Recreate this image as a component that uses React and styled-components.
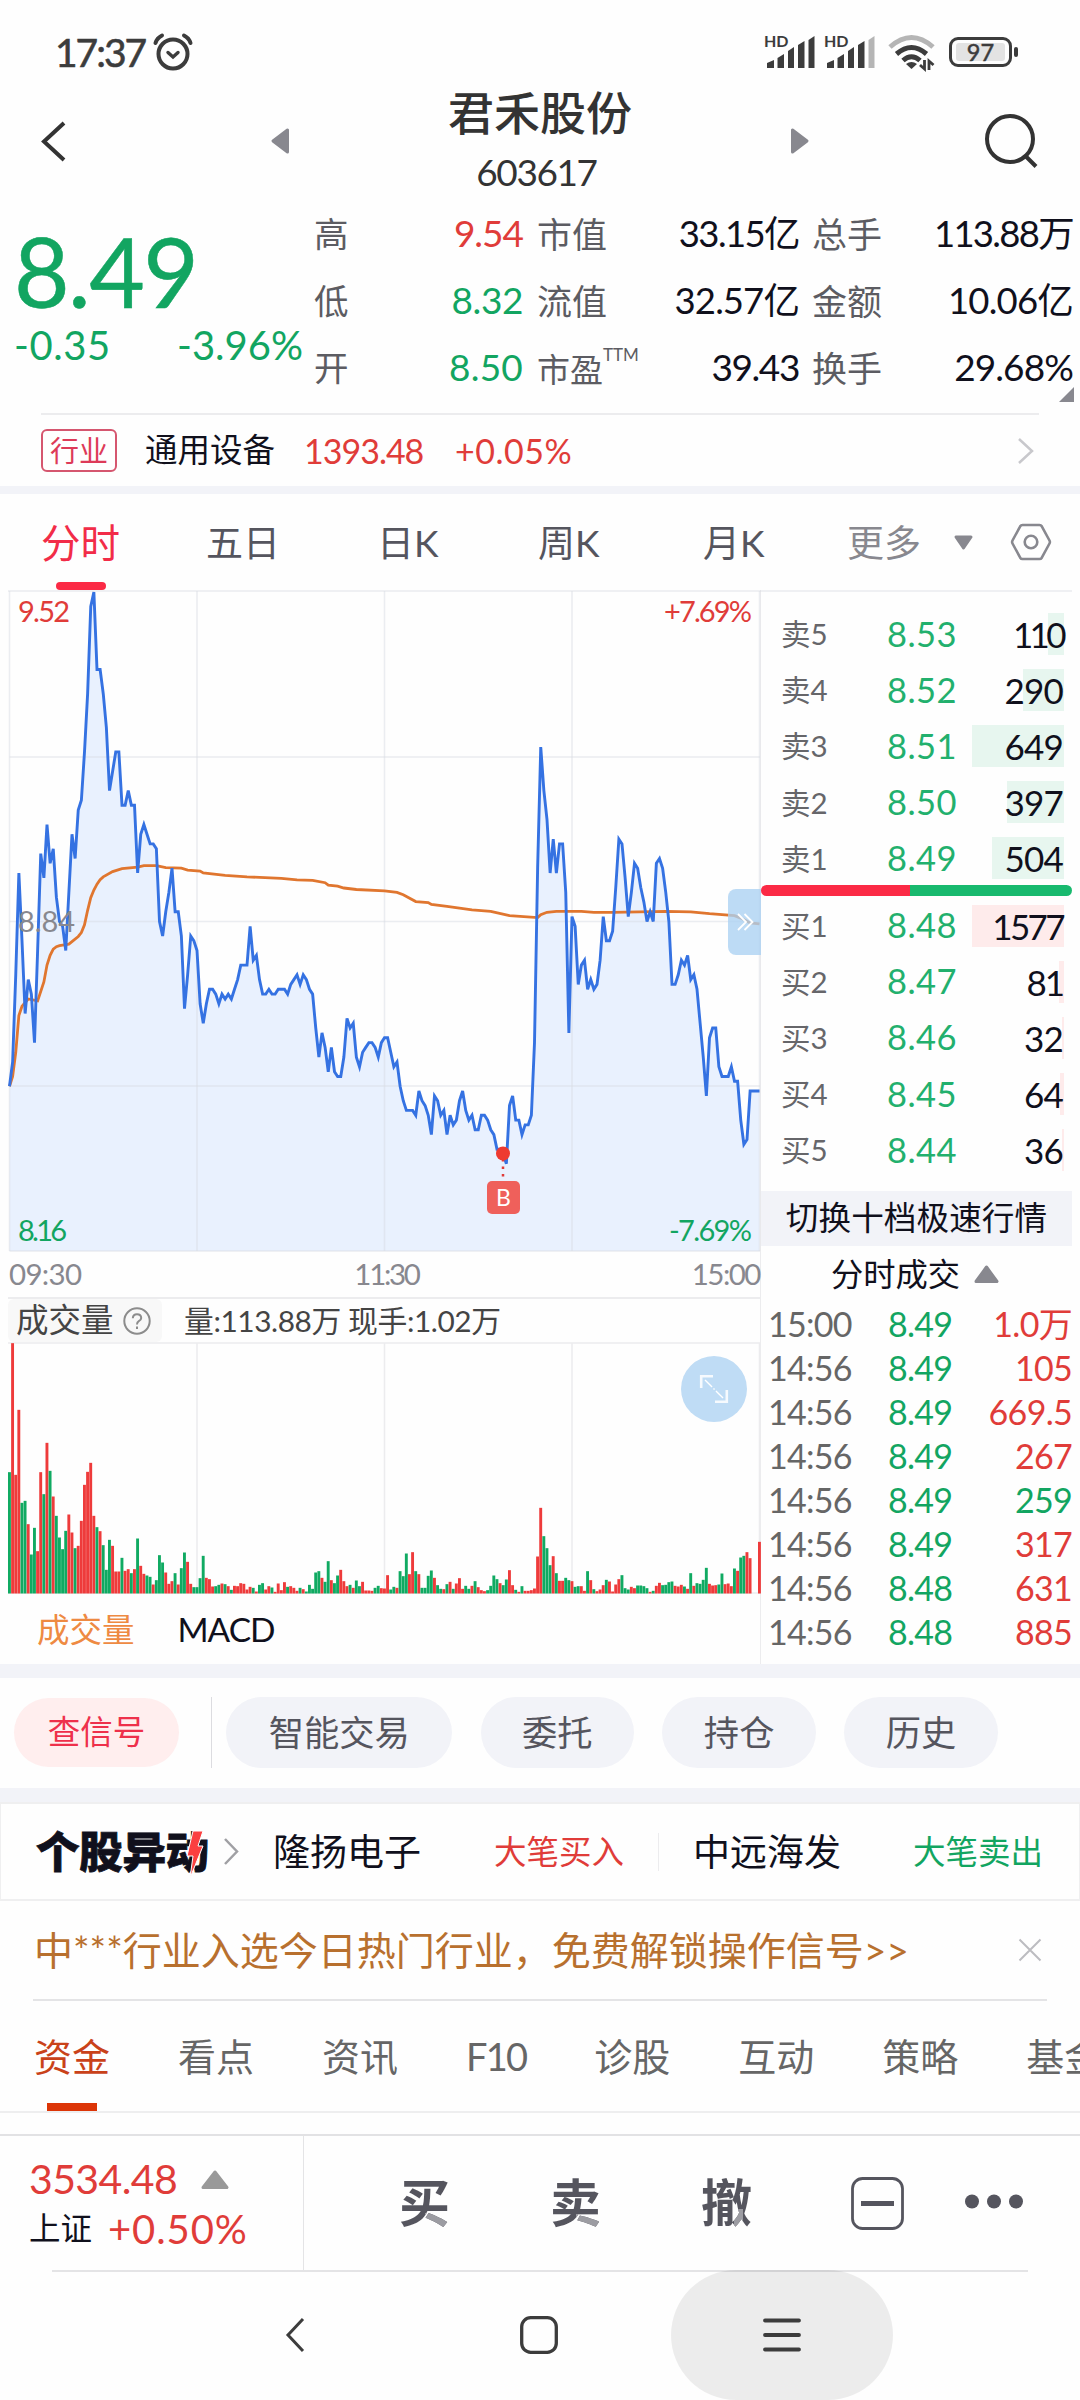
import React from 'react';
import styled, { createGlobalStyle } from 'styled-components';

const RED = '#e03c39';
const GREEN = '#12a561';
const GREY = '#88888f';
const LINE = '#ececee';
const BAND = '#f2f3f8';

const GlobalStyle = createGlobalStyle`
    * {
        box-sizing: border-box;
    }
    body {
        margin: 0;
        background: #fefefe;
        font-family: Lato, "Noto Sans CJK SC", sans-serif;
        color: #10101c;
    }
    svg {
        display: block;
        flex: none;
        overflow: visible;
    }
`;

const Screen = styled.div`
    width: 1080px;
    height: 2400px;
    overflow: hidden;
    display: flex;
    flex-direction: column;
    white-space: nowrap;
    line-height: 1;
    > * {
        flex: none;
    }
`;

const Text = styled.span`
    font-size: ${p => p.$size}px;
    color: ${p => p.$color || 'inherit'};
    font-weight: ${p => p.$weight || 400};
    letter-spacing: ${p => p.$ls || 0}px;
    line-height: 1.2;
`;

const Divider = styled.div`
    height: 2px;
    margin: 0 ${p => p.$right || 0}px 0 ${p => p.$left || 0}px;
    background: ${p => p.$color || LINE};
`;

const Band = styled.div`
    height: ${p => p.$h}px;
    background: ${BAND};
`;

const Gap = styled.div`
    width: ${p => p.$w || 0}px;
    height: ${p => p.$h || 0}px;
    flex: none;
`;

/* ---------- status bar + header ---------- */

const StatusBar = styled.div`
    height: 84px;
    padding: 20px 61px 0 55px;
    display: flex;
    align-items: center;
    justify-content: space-between;
    color: #3c3c3c;
`;

const StatusGroup = styled.div`
    display: flex;
    align-items: center;
    gap: ${p => p.$gap}px;
`;

const Clock = styled.span`
    font-size: 39px;
    letter-spacing: -2px;
    line-height: 1.2;
    -webkit-text-stroke: 0.6px #3c3c3c;
`;

const Header = styled.header`
    height: 116px;
    padding-bottom: 2px;
    display: grid;
    grid-template-columns: 271px 18px 502px 18px 271px;
    align-items: center;
    color: #333;
`;

const HeaderEdge = styled.div`
    display: flex;
    justify-content: ${p => (p.$end ? 'flex-end' : 'flex-start')};
    padding: 0 42px 0 41px;
`;

const TitleBlock = styled.div`
    display: flex;
    flex-direction: column;
    align-items: center;
    gap: 10px;
    padding-bottom: 2px;
`;

const Code = styled.span`
    font-size: 37px;
    letter-spacing: -1.4px;
    line-height: 1.2;
    margin-right: 7px;
`;

/* ---------- quote ---------- */

const Quote = styled.section`
    height: 213px;
    display: flex;
    position: relative;
`;

const PriceBlock = styled.div`
    width: 314px;
    padding: 20px 11px 0 14px;
    color: ${GREEN};
`;

const BigPrice = styled.div`
    font-size: 96px;
    line-height: 101px;
    letter-spacing: -1.6px;
    -webkit-text-stroke: 0.5px ${GREEN};
`;

const ChangeRow = styled.div`
    display: flex;
    justify-content: space-between;
`;

const StatColumn = styled.div`
    width: ${p => p.$w}px;
    margin-right: ${p => p.$mr}px;
    display: flex;
    flex-direction: column;
`;

const Stat = styled.div`
    height: 67px;
    display: flex;
    align-items: center;
    justify-content: space-between;
    sup {
        font-size: 17px;
        line-height: 1;
        vertical-align: 21px;
    }
`;

const Corner = styled.svg`
    position: absolute;
    right: 6px;
    bottom: 11px;
`;

const Industry = styled.section`
    height: 71px;
    padding: 0 46px 0 41px;
    display: flex;
    align-items: center;
    svg {
        margin-left: auto;
    }
`;

const Tag = styled.span`
    width: 76px;
    height: 43px;
    display: flex;
    align-items: center;
    justify-content: center;
    border: 2px solid #d5566f;
    border-radius: 6px;
    color: #dd3a58;
    font-size: 29px;
    margin-right: 28px;
`;

const IndustryName = styled.span`
    width: 159px;
    font-size: 32.5px;
`;

const IndustryNum = styled.span`
    width: ${p => p.$w}px;
    font-size: 34px;
    letter-spacing: ${p => p.$ls}px;
    color: ${RED};
`;

/* ---------- period tabs ---------- */

const PeriodTabs = styled.nav`
    height: 96px;
    display: grid;
    grid-template-columns: 206px 171px 161px 165px 144px 107px 56px 70px;
`;

const Period = styled.div`
    height: 96px;
    display: flex;
    align-items: center;
    font-size: 37px;
    color: ${p => (p.$muted ? GREY : '#55555e')};
    ${p => p.$active && `
        flex-direction: column;
        justify-content: flex-end;
        align-items: flex-start;
        padding-left: 41px;
        gap: 20px;
        font-size: 39.5px;
        color: #f22c48;
        &::after {
            content: "";
            width: 50px;
            height: 8px;
            margin-left: 15px;
            border-radius: 4px;
            background: #fb2a45;
        }
    `}
`;

/* ---------- market area ---------- */

const Market = styled.section`
    height: 1074px;
    display: flex;
`;

const ChartColumn = styled.div`
    width: 761px;
    position: relative;
    border-right: 1px solid ${LINE};
    display: flex;
    flex-direction: column;
`;

const TimeAxis = styled.div`
    height: 45px;
    padding: 0 0 2px 9px;
    display: flex;
    justify-content: space-between;
    align-items: center;
    color: ${GREY};
`;

const VolumeHead = styled.div`
    height: 45px;
    margin-left: 8px;
    display: flex;
    align-items: center;
    color: #444;
    border-top: 2px solid ${LINE};
`;

const VolumeChip = styled.div`
    width: 154px;
    height: 43px;
    padding-left: 8px;
    display: flex;
    align-items: center;
    gap: 9px;
    margin-right: 22px;
    border-radius: 6px;
    background: #f8f8f8;
    font-size: 32.5px;
`;

const IndicatorTabs = styled.div`
    height: 70px;
    padding-left: 37px;
    display: flex;
    align-items: center;
    gap: 43px;
`;

const SlideButton = styled.div`
    position: absolute;
    right: -1px;
    top: 299px;
    width: 33px;
    height: 66px;
    display: flex;
    align-items: center;
    justify-content: center;
    border-radius: 8px 0 0 8px;
    background: rgba(170, 209, 242, 0.78);
`;

const ExpandButton = styled.div`
    position: absolute;
    left: 681px;
    top: 766px;
    width: 66px;
    height: 66px;
    display: flex;
    align-items: center;
    justify-content: center;
    border-radius: 50%;
    background: #bfdcf5;
`;

const BookColumn = styled.div`
    width: 311px;
    padding-top: 16px;
    display: flex;
    flex-direction: column;
    overflow: hidden;
`;

const Level = styled.div`
    height: 56.1px;
    flex: none;
    display: grid;
    grid-template-columns: 106px 75px 1fr;
    align-items: center;
    padding: 0 8px 0 20px;
`;

const LevelName = styled.span`
    font-size: 29.5px;
    color: #66666a;
`;

const LevelPrice = styled.span`
    font-size: 34.5px;
    letter-spacing: 0.4px;
    text-align: center;
    margin-left: -5px;
    color: #22b06d;
`;

const LevelQty = styled.span`
    height: 42px;
    line-height: 42px;
    font-size: 35px;
    text-align: right;
    letter-spacing: ${p => p.$ls || -0.8}px;
    padding-right: 1px;
    background: linear-gradient(${p => p.$color}, ${p => p.$color}) right / ${p => p.$bar}px 100% no-repeat;
`;

const Ratio = styled.div`
    height: 11px;
    flex: none;
    border-radius: 6px;
    background: linear-gradient(90deg, #fb2a45 48%, #18b96e 48%);
    margin: -1px 0 1px;
`;

const SwitchDepth = styled.div`
    height: 55px;
    flex: none;
    margin-top: 13px;
    display: flex;
    align-items: center;
    justify-content: center;
    background: ${BAND};
    font-size: 32.6px;
    letter-spacing: 0.1px;
`;

const TicksTitle = styled.div`
    height: 56px;
    flex: none;
    display: flex;
    align-items: center;
    justify-content: center;
    gap: 14px;
    font-size: 32.3px;
    padding-right: 3px;
`;

const Tick = styled.div`
    height: 44px;
    flex: none;
    display: grid;
    grid-template-columns: 120px 66px 1fr;
    align-items: center;
    padding: 0 0 0 7px;
    font-size: 34px;
    letter-spacing: -0.7px;
    color: #666;
`;

const TickValue = styled.span`
    color: ${p => (p.$up ? RED : GREEN)};
    text-align: ${p => p.$align || 'left'};
`;

/* ---------- lower part ---------- */

const Actions = styled.section`
    height: 110px;
    padding: 0 0 1px 14px;
    display: flex;
    align-items: center;
`;

const Pill = styled.div`
    width: ${p => p.$w}px;
    height: ${p => (p.$hot ? 69 : 71)}px;
    margin-right: 28.3px;
    display: flex;
    align-items: center;
    justify-content: center;
    border-radius: 36px;
    font-size: ${p => (p.$hot ? 32.5 : 35.3)}px;
    color: ${p => (p.$hot ? '#ee304b' : '#55555e')};
    background: ${p => (p.$hot ? '#ffeeee' : BAND)};
`;

const VLine = styled.div`
    width: 1px;
    height: ${p => p.$h}px;
    margin: 0 ${p => p.$mr}px 0 ${p => p.$ml}px;
    background: ${p => p.$color || '#dcdce0'};
`;

const Movers = styled.section`
    height: 99px;
    border: 2px solid #efeff0;
    border-width: 2px 1px;
    padding: 0 33px 0 35px;
    display: flex;
    align-items: center;
`;

const MoversLogo = styled.div`
    width: 173px;
    position: relative;
    font-size: 43.5px;
    font-weight: 900;
    letter-spacing: -0.3px;
    -webkit-text-stroke: 0.8px #10101c;
    svg {
        position: absolute;
        left: 151px;
        top: 1px;
    }
`;

const MoverName = styled.span`
    width: ${p => p.$w}px;
    font-size: 37px;
`;

const Notice = styled.section`
    height: 98px;
    padding: 0 38px 0 34px;
    display: flex;
    align-items: center;
    justify-content: space-between;
    color: #b8702e;
    font-size: 39px;
`;

const InfoTabs = styled.nav`
    height: 110px;
    padding-left: 34px;
    display: flex;
    gap: 68px;
`;

const InfoTab = styled.div`
    height: 110px;
    flex: none;
    padding-top: 36px;
    font-size: 38px;
    letter-spacing: ${p => p.$ls || 0}px;
    color: ${p => (p.$active ? '#c9421a' : '#666')};
    &::after {
        content: "";
        display: ${p => (p.$active ? 'block' : 'none')};
        width: 50px;
        height: 8px;
        margin: 28px auto 0;
        background: #dc3507;
    }
`;

const TradeBar = styled.section`
    height: 134px;
    display: flex;
    align-items: center;
`;

const IndexBox = styled.div`
    width: 303px;
    padding: 2px 0 0 29px;
    display: flex;
    flex-direction: column;
    gap: 2px;
    color: ${RED};
`;

const IndexRow = styled.div`
    display: flex;
    align-items: center;
    height: 48px;
`;

/* the last stroke of each trade glyph is drawn in a lighter grey */
const TradeGlyph = styled.span`
    width: ${p => p.$w}px;
    font-size: 51px;
    font-weight: 700;
    line-height: 60px;
    color: transparent;
    background:
        linear-gradient(#9c9ca2, #9c9ca2) ${p => p.$tip} no-repeat,
        #55555e;
    background-clip: text;
    -webkit-background-clip: text;
`;

const NavBar = styled.div`
    height: 130px;
    display: flex;
    align-items: center;
    padding-left: 285px;
    margin-top: -2px;
`;

const NavPill = styled.div`
    width: 222px;
    height: 130px;
    margin-left: 113px;
    display: flex;
    align-items: center;
    justify-content: center;
    border-radius: 65px;
    background: rgba(0, 0, 0, 0.07);
`;

/* ---------- data ---------- */

// price per minute in cents, 09:30 - 15:00
const PRICES = [
    850, 855, 873, 894, 880, 865, 872, 869, 859, 878, 898, 893, 904, 896, 899, 889, 884, 883, 878, 890,
    902, 897, 907, 909, 919, 931, 949, 952, 936, 936, 931, 924, 911, 915, 919, 919, 908, 908, 911, 908,
    908, 894, 902, 904, 902, 900, 900, 899, 884, 881, 886, 890, 895, 886, 886, 881, 866, 873, 881, 880,
    878, 867, 863, 867, 870, 870, 869, 867, 869, 868, 869, 868, 870, 872, 875, 875, 875, 883, 876, 877,
    872, 869, 869, 870, 869, 869, 870, 870, 870, 869, 871, 872, 873, 871, 873, 872, 870, 869, 862, 856,
    861, 858, 853, 858, 853, 852, 852, 856, 864, 862, 863, 856, 854, 857, 858, 859, 859, 858, 856, 859,
    860, 860, 857, 854, 855, 850, 847, 845, 845, 845, 844, 849, 847, 846, 844, 840, 848, 847, 844, 845,
    840, 844, 842, 843, 847, 849, 845, 843, 844, 841, 841, 844, 844, 843, 841, 840, 837, 837, 836, 834,
    846, 848, 843, 843, 840, 842, 842, 844, 859, 895, 920, 911, 905, 894, 901, 894, 900, 900, 890, 861,
    885, 883, 871, 875, 876, 870, 872, 870, 871, 876, 885, 880, 880, 882, 891, 901, 900, 893, 885, 890,
    896, 895, 891, 888, 884, 886, 884, 896, 897, 895, 890, 884, 871, 871, 873, 876, 875, 877, 872, 873,
    870, 863, 856, 848, 860, 862, 862, 854, 852, 852, 852, 854, 851, 851, 843, 838, 839, 849, 849, 849,
    849,
];

// average price: [minute, cents]
const AVERAGE = [
    [0, 850], [1, 852], [2, 857], [3, 864.6], [4, 866.5], [6, 868], [9, 867.6], [11, 871.5], [12, 875],
    [13, 877], [14, 878.3], [15, 878.8], [16, 879], [19, 879.3], [22, 880.9], [23, 881.7], [24, 883.3],
    [25, 886.3], [26, 888.9], [27, 890.5], [28, 891.7], [29, 892.6], [30, 893.2], [33, 894.3], [36, 894.9],
    [41, 895.2], [43, 895.5], [47, 895.5], [50, 895.1], [55, 895], [57, 894.6], [61, 894.4], [62, 894],
    [69, 893.5], [76, 893.2], [87, 892.9], [92, 892.6], [97, 892.5], [101, 892], [102, 891.5], [105, 891.3],
    [107, 890.9], [111, 890.6], [120, 890.3], [124, 890], [126, 889.5], [130, 888.1], [134, 887.9],
    [135, 887.5], [140, 887.1], [148, 886.4], [154, 886.1], [160, 885.2], [169, 884.8], [170, 885.4],
    [172, 885.9], [175, 886.1], [183, 886.1], [187, 885.9], [193, 885.9], [210, 886.1], [218, 886],
    [224, 885.6], [232, 885.2], [234, 884.7], [237, 883.7], [240, 883.5],
];

// volume per minute, positive = rising, negative = falling
const VOLUMES = [
    -364, 751, 356, 551, -272, -278, 208, -117, -197, 127, 364, -298, 452, -368, 291, -233, -168, -133, -188, 237,
    183, -136, 143, 218, 326, 365, 392, 233, -199, 187, -145, -71, -161, 143, 66, 66, -107, 68, 73, -61,
    73, -165, 83, 59, -54, -50, 27, -40, -115, -93, 63, 29, 37, -61, 27, -76, -123, 95, 29, -19,
    -19, -46, -113, 47, 43, 21, -22, -26, 30, -28, 22, -11, 23, 22, 31, 29, 12, 20, -17, 6,
    -26, -31, 12, 22, -18, 5, 30, 10, 34, -20, 22, 17, 8, -17, 13, -6, -26, -14, -63, -67,
    47, -35, -97, 40, -31, -54, 71, 37, 22, -26, 17, -39, -22, 35, 9, 9, 8, -17, -23, 16,
    15, 55, -12, -20, 17, -67, -52, -120, 58, 124, -67, 58, -17, -17, -53, -69, 47, -25, -14, 13,
    -28, 35, -14, 30, 46, 14, -23, -14, 23, -37, 19, 10, 7, -10, -23, -54, -43, 31, -25, -42,
    70, 25, -11, 5, -22, 8, 8, 10, 15, 111, 257, -172, -136, -85, 112, -61, 38, 38, -47, -40,
    37, -20, -22, 22, 8, -67, 40, -13, 7, 12, 25, -41, 36, 6, 27, 43, -55, -16, -12, 20,
    16, -24, -24, -22, -16, 5, -8, 23, 32, -25, -26, -34, -36, 23, 21, 26, -21, 14, -61, 23,
    -31, -29, -41, -77, 29, 24, 25, -27, -60, 28, 30, 22, -75, 68, -108, -113, 124, 106, 0, 0,
    155,
];

// [name, price, quantity, bar width, letter spacing]
const ASKS = [
    ['卖5', '8.53', '110', 16, -3.6],
    ['卖4', '8.52', '290', 41],
    ['卖3', '8.51', '649', 92],
    ['卖2', '8.50', '397', 57],
    ['卖1', '8.49', '504', 72],
];

const BIDS = [
    ['买1', '8.48', '1577', 92, -2.6],
    ['买2', '8.47', '81', 5, -2],
    ['买3', '8.46', '32', 2],
    ['买4', '8.45', '64', 4],
    ['买5', '8.44', '36', 2],
];

const TICKS = [
    ['15:00', '8.49', '1.0万', true],
    ['14:56', '8.49', '105', true],
    ['14:56', '8.49', '669.5', true],
    ['14:56', '8.49', '267', true],
    ['14:56', '8.49', '259', false],
    ['14:56', '8.49', '317', true],
    ['14:56', '8.48', '631', true],
    ['14:56', '8.48', '885', true],
    ['14:56', '8.48', '500', false],
];

const minuteX = (i) => 9.5 + i * 3.125;
const priceY = (cents) => 2 + (952 - cents) * 4.845;

/* ---------- charts ---------- */

const PriceChart = () => {
    const line = PRICES.map((p, i) => `${minuteX(i)},${priceY(p).toFixed(1)}`).join(' ');
    const avg = AVERAGE.map(([i, p]) => `${minuteX(i)},${priceY(p).toFixed(1)}`).join(' ');

    return (
        <svg width="760" height="662" viewBox="0 0 760 662" fontFamily="Lato, sans-serif" fontSize="29">
            <polygon points={`9.5,661 ${line} 759.5,661`} fill="#e9f1fe" />
            <g stroke="#d8dce4" strokeOpacity="0.5" strokeWidth="1.5">
                <path d="M8 1H1072M9.5 167H760M9.5 331.5H760M9.5 496H760M9.5 661H760" />
                <path d="M9.5 1V661M197 1V661M384.5 1V661M572 1V661M759.5 1V661" />
            </g>
            <polyline points={avg} fill="none" stroke="#e0762f" strokeWidth="2.8" />
            <polyline points={line} fill="none" stroke="#3572e2" strokeWidth="2.9" />
            <text x="18" y="32" fill={RED} textLength="52">9.52</text>
            <text x="18" y="342" fill={GREY} textLength="57">8.84</text>
            <text x="18" y="651" fill={GREEN} textLength="49">8.16</text>
            <text x="664" y="32" fill={RED} textLength="88">+7.69%</text>
            <text x="669" y="651" fill={GREEN} textLength="83">-7.69%</text>
            <path d="M503 569V592" stroke={RED} strokeWidth="2.5" strokeDasharray="2.5 5" />
            <circle cx="503" cy="563.5" r="7" fill="#ee3a30" />
            <rect x="487" y="591" width="33" height="33" rx="5" fill="#ef605b" />
            <text x="503.5" y="616" fill="#fff" fontSize="23" textAnchor="middle">B</text>
        </svg>
    );
};

const VolumeChart = () => (
    <svg width="762" height="252" viewBox="0 0 762 252">
        <path
            d="M8 1H760M197 1V251M384.5 1V251M572 1V251M759.5 1V251M8 251H760"
            stroke={LINE}
            strokeWidth="1.5"
        />
        {VOLUMES.map((v, i) => (
            <rect
                key={i}
                x={minuteX(i) - 1.5}
                y={251.5 - Math.abs(v) / 3}
                width="2.9"
                height={Math.abs(v) / 3}
                fill={v > 0 ? '#ee3b3b' : '#10aa62'}
            />
        ))}
    </svg>
);

/* ---------- icons ---------- */

const AlarmIcon = () => (
    <svg width="40" height="38" viewBox="0 0 40 38" fill="none" stroke="#3c3c3c" strokeLinecap="round">
        <circle cx="20" cy="21" r="14.5" strokeWidth="4" />
        <path d="M15 19.5L20 24L25 19.5" strokeWidth="3.4" />
        <path d="M2.5 10Q4 5 9 2.5M37.5 10Q36 5 31 2.5" strokeWidth="4" />
    </svg>
);

const SignalIcon = ({ weak }) => (
    <svg width="50" height="34" viewBox="0 0 50 34" fill="#3c3c3c">
        <path d="M2 33V28L9 25V33ZM12.5 33V23L19 19V33ZM23 33V16L29 12V33ZM33 33V10L39.5 6V33Z" />
        <path d="M43.5 33V5L49.5 1V33Z" fill={weak ? '#b5b5b5' : '#3c3c3c'} />
        <text x="-1" y="11.5" fontSize="16" fontWeight="700" fontFamily="Lato, sans-serif">HD</text>
    </svg>
);

const WifiIcon = () => (
    <svg width="48" height="36" viewBox="0 0 48 36" fill="none" strokeWidth="5">
        <path d="M2 13Q23.5 -6 45 13" stroke="#b5b5b5" />
        <path d="M8.5 20Q23.5 7 38.5 20M15 26.5Q23.5 19 32 26.5" stroke="#3c3c3c" />
        <path d="M18 30Q23.5 26 29 30L23.5 35Z" fill="#3c3c3c" />
        <path d="M36.5 26V35L32 31M41 36V27L45.5 31" stroke="#3c3c3c" strokeWidth="2.8" />
    </svg>
);

const BatteryIcon = () => (
    <svg width="70" height="32" viewBox="0 0 70 32">
        <rect x="1.5" y="2.5" width="60" height="27" rx="7.5" fill="none" stroke="#3c3c3c" strokeWidth="3" />
        <rect x="7" y="7" width="49" height="18" rx="3" fill="#e3e3e3" />
        <rect x="65" y="11" width="4" height="10" rx="2" fill="#3c3c3c" />
        <text x="31.5" y="24.5" textAnchor="middle" fontSize="23.5" fill="#3c3c3c" stroke="#3c3c3c" strokeWidth="0.5" fontFamily="Lato, sans-serif">97</text>
    </svg>
);

const Triangle = ({ w, h, points, color = GREY }) => (
    <svg width={w} height={h} viewBox={`0 0 ${w} ${h}`}>
        <polygon points={points} fill={color} stroke={color} strokeWidth="3" strokeLinejoin="round" />
    </svg>
);

const Chevron = ({ w, h, color, left, stroke = 2.5 }) => (
    <svg width={w} height={h} viewBox={`0 0 ${w} ${h}`} fill="none" stroke={color} strokeWidth={stroke}>
        <path d={left ? `M${w - 2} 2L3 ${h / 2}L${w - 2} ${h - 2}` : `M2 2L${w - 2} ${h / 2}L2 ${h - 2}`} />
    </svg>
);

/* ---------- sections ---------- */

const Levels = ({ rows, color }) => rows.map(([name, price, qty, bar, ls]) => (
    <Level key={name}>
        <LevelName>{name}</LevelName>
        <LevelPrice>{price}</LevelPrice>
        <LevelQty $bar={bar} $color={color} $ls={ls}>{qty}</LevelQty>
    </Level>
));

const QuotePanel = () => (
    <Quote>
        <PriceBlock>
            <BigPrice>8.49</BigPrice>
            <ChangeRow>
                <Text $size={40} $ls={0.6}>-0.35</Text>
                <Text $size={40} $ls={0}>-3.96%</Text>
            </ChangeRow>
        </PriceBlock>
        <StatColumn $w={209} $mr={14}>
            <Stat><Text $size={34.5} $color="#5c5c62">高</Text><Text $size={37} $ls={-1} $color={RED}>9.54</Text></Stat>
            <Stat><Text $size={34.5} $color="#5c5c62">低</Text><Text $size={37} $ls={-0.4} $color={GREEN}>8.32</Text></Stat>
            <Stat><Text $size={34.5} $color="#5c5c62">开</Text><Text $size={37} $ls={0.2} $color={GREEN}>8.50</Text></Stat>
        </StatColumn>
        <StatColumn $w={262} $mr={13}>
            <Stat><Text $size={35} $color="#5c5c62">市值</Text><Text $size={36.5} $ls={-1.6}>33.15亿</Text></Stat>
            <Stat><Text $size={35} $color="#5c5c62">流值</Text><Text $size={36.5} $ls={-0.9}>32.57亿</Text></Stat>
            <Stat><Text $size={33} $color="#5c5c62">市盈<sup>TTM</sup></Text><Text $size={37} $ls={-1.4}>39.43</Text></Stat>
        </StatColumn>
        <StatColumn $w={261} $mr={0}>
            <Stat><Text $size={35} $color="#5c5c62">总手</Text><Text $size={36.5} $ls={-1.7}>113.88万</Text></Stat>
            <Stat><Text $size={35} $color="#5c5c62">金额</Text><Text $size={36.5} $ls={-0.8}>10.06亿</Text></Stat>
            <Stat><Text $size={35} $color="#5c5c62">换手</Text><Text $size={37} $ls={-0.9}>29.68%</Text></Stat>
        </StatColumn>
        <Corner width="15" height="15" viewBox="0 0 15 15"><path d="M15 0V15H0Z" fill={GREY} /></Corner>
    </Quote>
);

const ChartPanel = () => (
    <ChartColumn>
        <PriceChart />
        <TimeAxis>
            <Text $size={29.5} $ls={-0.7}>09:30</Text>
            <Text $size={29.5} $ls={-2.3}>11:30</Text>
            <Text $size={29.5} $ls={-1.5}>15:00</Text>
        </TimeAxis>
        <VolumeHead>
            <VolumeChip>
                成交量
                <svg width="28" height="28" viewBox="0 0 28 28" fill="none" stroke="#8c8c8c" strokeWidth="2">
                    <circle cx="14" cy="14" r="12.7" />
                    <path d="M9.8 11.2Q10 7.2 14 7.2Q18.2 7.2 18.2 10.9Q18.2 12.9 15.8 14.2Q14 15.3 14 17.5M14 19.5V22" />
                </svg>
            </VolumeChip>
            <Text $size={29.8} $ls={-0.4}>量:113.88万 现手:1.02万</Text>
        </VolumeHead>
        <VolumeChart />
        <IndicatorTabs>
            <Text $size={32.5} $color="#ee8a42">成交量</Text>
            <Text $size={33.5} $ls={-1}>MACD</Text>
        </IndicatorTabs>
        <SlideButton>
            <svg width="18" height="20" viewBox="0 0 18 20" fill="none" stroke="#fff" strokeWidth="1.8">
                <path d="M2 2L10 10L2 18M8.5 2L16.5 10L8.5 18" />
            </svg>
        </SlideButton>
        <ExpandButton>
            <svg width="30" height="30" viewBox="0 0 30 30" fill="none" stroke="#fff">
                <path d="M2.2 14V2.2H14M27.8 16V27.8H16" strokeWidth="2.6" strokeOpacity="0.85" />
                <path d="M6 6L25 25" strokeWidth="1.4" strokeDasharray="10 2 1.5 2" />
            </svg>
        </ExpandButton>
    </ChartColumn>
);

const BookPanel = () => (
    <BookColumn>
        <Levels rows={ASKS} color="#e7f6ef" />
        <Ratio />
        <Levels rows={BIDS} color="#feebeb" />
        <SwitchDepth>切换十档极速行情</SwitchDepth>
        <TicksTitle>
            分时成交
            <Triangle w={25} h={18} points="12.5,2 23,16.5 2,16.5" />
        </TicksTitle>
        {TICKS.map(([time, price, qty, up], i) => (
            <Tick key={i}>
                <span>{time}</span>
                <TickValue>{price}</TickValue>
                <TickValue $up={up} $align="right">{qty}</TickValue>
            </Tick>
        ))}
    </BookColumn>
);

const App = () => {
    return (
        <Screen>
            <GlobalStyle />
            <StatusBar>
                <StatusGroup $gap={8}>
                    <Clock>17:37</Clock>
                    <AlarmIcon />
                </StatusGroup>
                <StatusGroup $gap={13}>
                    <StatusGroup $gap={10}>
                        <SignalIcon />
                        <SignalIcon weak />
                    </StatusGroup>
                    <WifiIcon />
                    <BatteryIcon />
                </StatusGroup>
            </StatusBar>

            <Header>
                <HeaderEdge><Chevron w={25} h={41} color="#333" stroke={4} left /></HeaderEdge>
                <Triangle w={18} h={26} points="16.5,2 16.5,24 2,13" />
                <TitleBlock>
                    <Text $size={46} $weight={500}>君禾股份</Text>
                    <Code>603617</Code>
                </TitleBlock>
                <Triangle w={18} h={26} points="1.5,2 1.5,24 16,13" />
                <HeaderEdge $end>
                    <svg width="54" height="54" viewBox="0 0 54 54" fill="none" stroke="#333" strokeWidth="4">
                        <circle cx="26" cy="25" r="23" />
                        <path d="M41.5 42L52 52.5" />
                    </svg>
                </HeaderEdge>
            </Header>

            <QuotePanel />
            <Divider $left={41} $right={41} />

            <Industry>
                <Tag>行业</Tag>
                <IndustryName>通用设备</IndustryName>
                <IndustryNum $w={151} $ls={-1}>1393.48</IndustryNum>
                <IndustryNum $w={130} $ls={0.5}>+0.05%</IndustryNum>
                <Chevron w={17} h={28} color="#c8c8cc" />
            </Industry>
            <Band $h={8} />

            <PeriodTabs>
                <Period $active>分时</Period>
                <Period>五日</Period>
                <Period>日K</Period>
                <Period>周K</Period>
                <Period>月K</Period>
                <Period $muted>更多</Period>
                <Period><Triangle w={19} h={15} points="2,2 17,2 9.5,13" /></Period>
                <Period>
                    <svg width="42" height="38" viewBox="0 0 42 38" fill="none" stroke="#88888f" strokeWidth="2.6">
                        <path d="M12.5 2H29.5Q31 2 31.8 3.3L39.5 17.5Q40.3 19 39.5 20.5L31.8 34.7Q31 36 29.5 36H12.5Q11 36 10.2 34.7L2.5 20.5Q1.7 19 2.5 17.5L10.2 3.3Q11 2 12.5 2Z" />
                        <circle cx="21" cy="19" r="6.3" />
                    </svg>
                </Period>
            </PeriodTabs>

            <Market>
                <ChartPanel />
                <BookPanel />
            </Market>

            <Band $h={14} />
            <Actions>
                <Pill $hot $w={165}>查信号</Pill>
                <VLine $h={71} $ml={4} $mr={14} />
                <Pill $w={226}>智能交易</Pill>
                <Pill $w={153.5}>委托</Pill>
                <Pill $w={153.5}>持仓</Pill>
                <Pill $w={153.5}>历史</Pill>
            </Actions>
            <Band $h={14} />

            <Movers>
                <MoversLogo>
                    个股异动
                    <svg width="16" height="48" viewBox="0 0 16 48">
                        <path d="M6 0H16L11 15H16L3 47L6 25H0Z" fill="#fb4040" stroke="#fff" strokeWidth="1" />
                    </svg>
                </MoversLogo>
                <Gap $w={14} />
                <Chevron w={16} h={29} color="#a0a0a4" />
                <Gap $w={34} />
                <MoverName $w={221}>隆扬电子</MoverName>
                <Text $size={32.5} $color={RED}>大笔买入</Text>
                <VLine $h={38} $ml={34} $mr={34} $color="#ececee" />
                <MoverName $w={220}>中远海发</MoverName>
                <Text $size={32.5} $color={GREEN}>大笔卖出</Text>
            </Movers>

            <Notice>
                <span>中***行业入选今日热门行业，免费解锁操作信号&gt;&gt;</span>
                <svg width="24" height="24" viewBox="0 0 24 24" stroke="#bcbcc0" strokeWidth="2">
                    <path d="M1.5 1.5L22.5 22.5M22.5 1.5L1.5 22.5" />
                </svg>
            </Notice>
            <Divider $left={33} $right={33} $color="#e4e4e6" />

            <InfoTabs>
                {['资金', '看点', '资讯', 'F10', '诊股', '互动', '策略', '基金'].map((name, i) => (
                    <InfoTab key={name} $active={i === 0} $ls={name === 'F10' ? -1.8 : 0}>{name}</InfoTab>
                ))}
            </InfoTabs>
            <Divider $color="#eeeeef" />
            <Gap $h={21} />
            <Divider $color="#e2e2e4" />

            <TradeBar>
                <IndexBox>
                    <IndexRow>
                        <Text $size={41} $ls={-0.6}>3534.48</Text>
                        <Gap $w={24} />
                        <Triangle w={28} h={19} points="14,2 26,17.5 2,17.5" color="#999" />
                    </IndexRow>
                    <IndexRow>
                        <Text $size={31.5} $color="#10101c">上证</Text>
                        <Gap $w={16} />
                        <Text $size={40} $ls={0.9}>+0.50%</Text>
                    </IndexRow>
                </IndexBox>
                <VLine $h={134} $ml={0} $mr={95} $color="#e4e4e6" />
                <TradeGlyph $w={151} $tip="26px 40px / 25px 14px">买</TradeGlyph>
                <TradeGlyph $w={151} $tip="26px 41px / 25px 14px">卖</TradeGlyph>
                <TradeGlyph $w={150} $tip="33px 36px / 9px 20px">撤</TradeGlyph>
                <svg width="53" height="53" viewBox="0 0 53 53" fill="none" stroke="#55555e">
                    <rect x="1.5" y="1.5" width="50" height="50" rx="10" strokeWidth="2.8" />
                    <path d="M10 26.5H43" strokeWidth="5" />
                </svg>
                <Gap $w={59} />
                <svg width="62" height="16" viewBox="0 0 62 16" fill="#55555e">
                    <circle cx="9" cy="6.5" r="7" />
                    <circle cx="31" cy="6.5" r="7" />
                    <circle cx="53" cy="6.5" r="7" />
                </svg>
            </TradeBar>
            <Divider $left={52} $right={52} $color="#e4e4e6" />

            <NavBar>
                <Chevron w={20} h={36} color="#3c3c3c" stroke={3} left />
                <Gap $w={215} />
                <svg width="38" height="38" viewBox="0 0 38 38">
                    <rect x="1.7" y="1.7" width="34.6" height="34.6" rx="9" fill="none" stroke="#3c3c3c" strokeWidth="3.3" />
                </svg>
                <NavPill>
                    <svg width="38" height="34" viewBox="0 0 38 34" stroke="#3c3c3c" strokeWidth="3.8" strokeLinecap="round">
                        <path d="M2 2.500H36M2 17H36M2 31.500H36" />
                    </svg>
                </NavPill>
            </NavBar>
        </Screen>
    );
};

export default App;
